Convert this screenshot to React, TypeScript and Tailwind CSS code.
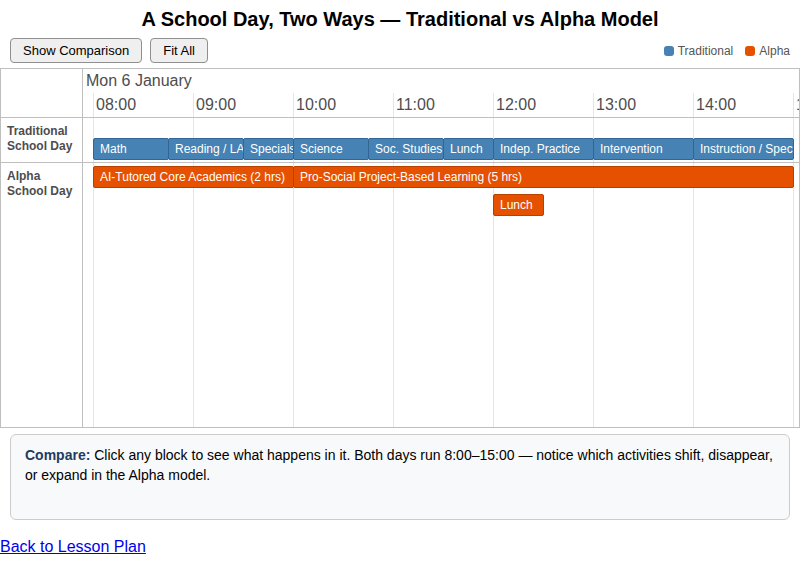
import React from 'react'

type Block = { label: string; start: number; end: number; top: number }

// hours from 8:00, 100px per hour
const traditional: Block[] = [
  { label: 'Math', start: 0, end: 0.75, top: 20 },
  { label: 'Reading / LA', start: 0.75, end: 1.5, top: 20 },
  { label: 'Specials', start: 1.5, end: 2, top: 20 },
  { label: 'Science', start: 2, end: 2.75, top: 20 },
  { label: 'Soc. Studies', start: 2.75, end: 3.5, top: 20 },
  { label: 'Lunch', start: 3.5, end: 4, top: 20 },
  { label: 'Indep. Practice', start: 4, end: 5, top: 20 },
  { label: 'Intervention', start: 5, end: 6, top: 20 },
  { label: 'Instruction / Specials', start: 6, end: 7, top: 20 },
]

const alpha: Block[] = [
  { label: 'AI-Tutored Core Academics (2 hrs)', start: 0, end: 2, top: 3 },
  { label: 'Pro-Social Project-Based Learning (5 hrs)', start: 2, end: 7, top: 3 },
  { label: 'Lunch', start: 4, end: 4.5, top: 31 },
]

const hours = ['08:00', '09:00', '10:00', '11:00', '12:00', '13:00', '14:00', '15:00']
const OFFSET = 10
const PX = 100

function Item({ b, kind }: { b: Block; kind: 'trad' | 'alpha' }) {
  const color =
    kind === 'trad'
      ? 'bg-[#4682b4] border-[#2f6696]'
      : 'bg-[#e65100] border-[#b84000]'
  return (
    <div
      className={`absolute h-[22px] border rounded-[2px] overflow-hidden whitespace-nowrap text-white text-[12px] leading-[20px] pl-[6px] ${color}`}
      style={{ left: OFFSET + b.start * PX, width: (b.end - b.start) * PX + 1, top: b.top }}
    >
      {b.label}
    </div>
  )
}

function GridLines() {
  return (
    <>
      {hours.map((h, i) => (
        <div
          key={h}
          className="absolute top-0 bottom-0 w-px bg-[#e5e5e5]"
          style={{ left: OFFSET + i * PX }}
        />
      ))}
    </>
  )
}

export default function App() {
  return (
    <div className="w-[800px] h-[572px] bg-white font-['Liberation_Sans',Arial,sans-serif] text-black">
      <h1 className="text-center text-[20px] font-bold leading-[24px] pt-[7px]">
        A School Day, Two Ways — Traditional vs Alpha Model
      </h1>

      <div className="flex items-center justify-between mt-[7px] px-[10px]">
        <div className="flex gap-[8px]">
          <button className="h-[25px] px-[12px] text-[13px] bg-[#efefef] border border-[#8f8f8f] rounded-[4px]">
            Show Comparison
          </button>
          <button className="h-[25px] px-[12px] text-[13px] bg-[#efefef] border border-[#8f8f8f] rounded-[4px]">
            Fit All
          </button>
        </div>
        <div className="flex items-center text-[12px] text-[#555] gap-[12px]">
          <span className="flex items-center gap-[4px]">
            <span className="w-[10px] h-[10px] rounded-[3px] bg-[#4682b4]" />
            Traditional
          </span>
          <span className="flex items-center gap-[4px]">
            <span className="w-[10px] h-[10px] rounded-[3px] bg-[#e65100]" />
            Alpha
          </span>
        </div>
      </div>

      {/* timeline */}
      <div className="mt-[5px] border border-[#bfbfbf] h-[360px] flex flex-col">
        {/* axis */}
        <div className="flex h-[49px] border-b border-[#bfbfbf]">
          <div className="w-[82px] shrink-0 border-r border-[#bfbfbf]" />
          <div className="relative flex-1 overflow-hidden text-[16px] text-[#4d4d4d]">
            <div className="absolute left-[3px] top-[2px] leading-[20px]">Mon 6 January</div>
            {hours.map((h, i) => (
              <React.Fragment key={h}>
                <div
                  className="absolute top-[24px] bottom-0 w-px bg-[#e5e5e5]"
                  style={{ left: OFFSET + i * PX }}
                />
                <div
                  className="absolute top-[26px] leading-[20px]"
                  style={{ left: OFFSET + i * PX + 3 }}
                >
                  {h}
                </div>
              </React.Fragment>
            ))}
          </div>
        </div>

        {/* traditional row */}
        <div className="flex h-[45px] border-b border-[#bfbfbf]">
          <div className="w-[82px] shrink-0 border-r border-[#bfbfbf] px-[6px] pt-[6px] text-[12px] font-bold text-[#4d4d4d] leading-[15px]">
            Traditional
            <br />
            School Day
          </div>
          <div className="relative flex-1 overflow-hidden">
            <GridLines />
            {traditional.map((b) => (
              <Item key={b.label} b={b} kind="trad" />
            ))}
          </div>
        </div>

        {/* alpha row */}
        <div className="flex flex-1">
          <div className="w-[82px] shrink-0 border-r border-[#bfbfbf] px-[6px] pt-[6px] text-[12px] font-bold text-[#4d4d4d] leading-[15px]">
            Alpha
            <br />
            School Day
          </div>
          <div className="relative flex-1 overflow-hidden">
            <GridLines />
            {alpha.map((b) => (
              <Item key={b.label + b.start} b={b} kind="alpha" />
            ))}
          </div>
        </div>
      </div>

      <div className="mx-[10px] mt-[6px] h-[86px] bg-[#f8f9fa] border border-[#cccccc] rounded-[6px] px-[14px] pt-[10px] text-[14px] leading-[20px]">
        <strong className="text-[#1f3b64]">Compare:</strong> Click any block to see what happens in it. Both
        days run 8:00–15:00 — notice which activities shift, disappear, or expand in the Alpha model.
      </div>

      <a href="#" className="block mt-[17px] text-[16px] leading-[20px] text-[#0000ee] underline w-fit">
        Back to Lesson Plan
      </a>
    </div>
  )
}
